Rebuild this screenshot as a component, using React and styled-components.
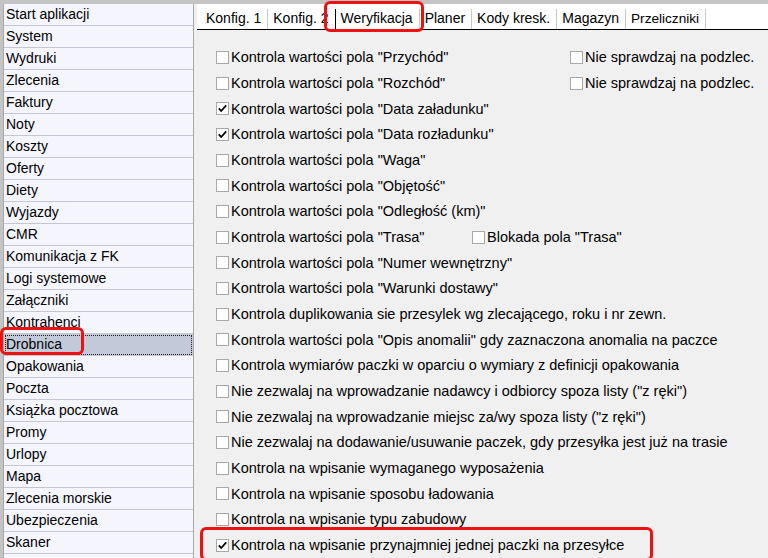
import React from "react";
import styled, { createGlobalStyle, css } from "styled-components";

const GlobalStyle = createGlobalStyle`
  html, body {
    margin: 0;
    padding: 0;
    background-color: #c4c4c4;
  }
  *, *:before, *:after {
    box-sizing: border-box;
  }
  body {
    font-family: Tahoma, "Liberation Sans", Arial, sans-serif;
    font-size: 14px;
    color: #000;
  }
`;

const Window = styled.div`
  display: flex;
  height: 558px;
  width: 768px;
  padding-top: 4px;
  overflow: hidden;
  background-color: #c4c4c4;
`;

const Sidebar = styled.div`
  width: 191px;
  margin-left: 3px;
  background-color: #f5f5fd;
  border-left: 1px solid #a8a8a8;
  border-right: 1px solid #a8a8a8;
  display: flex;
  flex-direction: column;
  flex-shrink: 0;
`;

const NavItem = styled.div`
  position: relative;
  height: 22px;
  line-height: 21px;
  padding-left: 2px;
  font-size: 14px;
  border-bottom: 1px solid #c6c6d6;
  white-space: nowrap;
  flex-shrink: 0;
  ${props =>
    props.selected &&
    css`
      background-color: #c2cad9;
      outline: 1px dotted #222;
      outline-offset: -2px;
    `}
`;

const Marker = styled.span`
  position: absolute;
  border: 3px solid #ee1111;
  border-radius: 6px;
  pointer-events: none;
  ${props => css`
    left: ${props.left}px;
    top: ${props.top}px;
    width: ${props.width}px;
    height: ${props.height}px;
  `}
`;

const Gap = styled.div`
  width: 3px;
  background-color: #f0f0f0;
  flex-shrink: 0;
`;

const Main = styled.div`
  flex: 1;
  display: flex;
  flex-direction: column;
  background-color: #f0f0f0;
`;

const TabBar = styled.div`
  height: 26px;
  display: flex;
  align-items: flex-end;
  background-color: #ffffff;
  border-bottom: 1px solid #000;
  padding-left: 4px;
`;

const Tab = styled.div`
  position: relative;
  height: 20px;
  line-height: 19px;
  padding: 0 6px 0 5px;
  font-size: ${props => (props.small ? "13.6px" : "14px")};
  white-space: nowrap;
  border-right: 1px solid #c8c8c8;
  ${props =>
    props.active &&
    css`
      border-left: 1px solid #000;
      margin-left: -1px;
    `}
`;

const Content = styled.div`
  padding: 15px 0 0 19px;
  display: flex;
  flex-direction: column;
`;

const Row = styled.div`
  position: relative;
  height: 25.68px;
  flex-shrink: 0;
  display: grid;
  grid-template-columns: ${props => (props.col ? `${props.col}px auto` : "auto")};
  justify-content: start;
  align-items: center;
`;

const Option = styled.label`
  display: flex;
  align-items: center;
  gap: 2px;
  font-size: 14.5px;
  white-space: nowrap;
`;

const Box = styled.span`
  width: 13px;
  height: 13px;
  border: 1px solid #a8a8a8;
  background-color: #ffffff;
  display: flex;
  align-items: center;
  justify-content: center;
  flex-shrink: 0;
`;

const Check = () => (
  <svg width="9" height="9" viewBox="0 0 9 9">
    <polyline
      points="0.8,4.3 3.2,7 8.2,1.4"
      fill="none"
      stroke="#000"
      strokeWidth="1.8"
    />
  </svg>
);

const Checkbox = ({ checked, children }) => (
  <Option>
    <Box>{checked && <Check />}</Box>
    <span>{children}</span>
  </Option>
);

const navItems = [
  "Start aplikacji",
  "System",
  "Wydruki",
  "Zlecenia",
  "Faktury",
  "Noty",
  "Koszty",
  "Oferty",
  "Diety",
  "Wyjazdy",
  "CMR",
  "Komunikacja z FK",
  "Logi systemowe",
  "Załączniki",
  "Kontrahenci",
  "Drobnica",
  "Opakowania",
  "Poczta",
  "Książka pocztowa",
  "Promy",
  "Urlopy",
  "Mapa",
  "Zlecenia morskie",
  "Ubezpieczenia",
  "Skaner"
];

const tabs = [
  "Konfig. 1",
  "Konfig. 2",
  "Weryfikacja",
  "Planer",
  "Kody kresk.",
  "Magazyn",
  "Przeliczniki"
];

const options = [
  { label: 'Kontrola wartości pola "Przychód"', extra: "Nie sprawdzaj na podzlec.", col: 354 },
  { label: 'Kontrola wartości pola "Rozchód"', extra: "Nie sprawdzaj na podzlec.", col: 354 },
  { label: 'Kontrola wartości pola "Data załadunku"', checked: true },
  { label: 'Kontrola wartości pola "Data rozładunku"', checked: true },
  { label: 'Kontrola wartości pola "Waga"' },
  { label: 'Kontrola wartości pola "Objętość"' },
  { label: 'Kontrola wartości pola "Odległość (km)"' },
  { label: 'Kontrola wartości pola "Trasa"', extra: 'Blokada pola "Trasa"', col: 256 },
  { label: 'Kontrola wartości pola "Numer wewnętrzny"' },
  { label: 'Kontrola wartości pola "Warunki dostawy"' },
  { label: "Kontrola duplikowania sie przesylek wg zlecającego, roku i nr zewn." },
  { label: 'Kontrola wartości pola "Opis anomalii" gdy zaznaczona anomalia na paczce' },
  { label: "Kontrola wymiarów paczki w oparciu o wymiary z definicji opakowania" },
  { label: 'Nie zezwalaj na wprowadzanie nadawcy i odbiorcy spoza listy ("z ręki")' },
  { label: 'Nie zezwalaj na wprowadzanie miejsc za/wy spoza listy ("z ręki")' },
  { label: "Nie zezwalaj na dodawanie/usuwanie paczek, gdy przesyłka jest już na trasie" },
  { label: "Kontrola na wpisanie wymaganego wyposażenia" },
  { label: "Kontrola na wpisanie sposobu ładowania" },
  { label: "Kontrola na wpisanie typu zabudowy" },
  { label: "Kontrola na wpisanie przynajmniej jednej paczki na przesyłce", checked: true, marked: true }
];

export default function App() {
  return (
    <Window>
      <GlobalStyle />
      <Sidebar>
        {navItems.map(item => (
          <NavItem key={item} selected={item === "Drobnica"}>
            {item}
            {item === "Drobnica" && (
              <Marker left={-4} top={-7} width={84} height={28} />
            )}
          </NavItem>
        ))}
      </Sidebar>
      <Gap />
      <Main>
        <TabBar>
          {tabs.map(tab => (
            <Tab
              key={tab}
              active={tab === "Weryfikacja"}
              small={tab === "Przeliczniki"}
            >
              {tab}
              {tab === "Weryfikacja" && (
                <Marker left={-12} top={-8} width={100} height={31} />
              )}
            </Tab>
          ))}
        </TabBar>
        <Content>
          {options.map(opt => (
            <Row key={opt.label} col={opt.col}>
              <Checkbox checked={opt.checked}>{opt.label}</Checkbox>
              {opt.extra && <Checkbox>{opt.extra}</Checkbox>}
              {opt.marked && <Marker left={-16} top={-5} width={453} height={34} />}
            </Row>
          ))}
        </Content>
      </Main>
    </Window>
  );
}
